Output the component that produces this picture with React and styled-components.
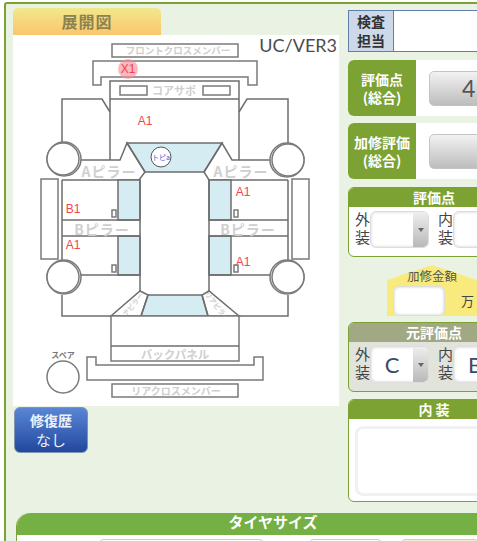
import styled, { createGlobalStyle } from "styled-components";

const GREEN = "#7ca234";
const JP = `"Noto Sans CJK JP", "Liberation Sans", sans-serif`;

const GlobalStyle = createGlobalStyle`
    html, body {
        margin: 0;
        padding: 0;
        background: #fff;
        overflow: hidden;
        height: 541px;
    }
`;

const Page = styled.div`
    box-sizing: border-box;
    width: 640px;
    margin: 2px 0 0 4px;
    padding: 4px 8px 12px 7px;
    border: 2px solid ${GREEN};
    border-radius: 3px;
    background: #eaf2e3;
    font-family: ${JP};
`;

const TopRow = styled.div`
    display: flex;
    align-items: flex-start;
    gap: 9px;
`;

const LeftColumn = styled.div`
    width: 326px;
    flex: none;
`;

const RightColumn = styled.div`
    width: 200px;
    flex: none;
    padding-top: 2px;
`;

const MapTab = styled.div`
    width: 148px;
    height: 27px;
    border-radius: 5px 5px 0 0;
    background: linear-gradient(#f1e88c, #fbc56c);
    color: #8c8350;
    font-size: 16px;
    font-weight: 700;
    line-height: 27px;
    text-align: center;
    letter-spacing: 1px;
`;

const MapSheet = styled.div`
    position: relative;
    height: 371px;
    background: #fff;
`;

const Version = styled.span`
    position: absolute;
    top: 0;
    right: 2px;
    font-family: Lato, "Liberation Sans", sans-serif;
    font-size: 18px;
    line-height: 20px;
    color: #4c4c4c;
`;

const Drawing = styled.svg`
    display: block;
    width: 326px;
    height: 371px;
    font-family: ${JP};

    .line {
        fill: none;
        stroke: #6e6e6e;
        stroke-width: 1.5;
    }
    .box {
        fill: #fff;
        stroke: #7a7a7a;
        stroke-width: 1.5;
    }
    .glass {
        fill: #d5ecf3;
        stroke: #6e6e6e;
        stroke-width: 1.5;
    }
    .part {
        fill: #cfcfcf;
        font-weight: 700;
        text-anchor: middle;
    }
    .pillar {
        letter-spacing: 1px;
    }
    .mark {
        fill: #f4434e;
        font-family: "Liberation Sans", sans-serif;
        font-size: 12px;
        text-anchor: middle;
    }
`;

const RepairButton = styled.button`
    display: block;
    width: 74px;
    height: 46px;
    margin: 1px 0 0 1px;
    padding: 0;
    border: 1px solid #8093b5;
    border-radius: 6px;
    background: linear-gradient(#5a86d6, #22489e);
    color: #eef2fa;
    font-family: ${JP};
    line-height: 20px;

    b {
        display: block;
        font-size: 14px;
    }
    span {
        display: block;
        font-size: 15px;
    }
`;

const Inspector = styled.div`
    display: flex;
    height: 42px;
    box-sizing: border-box;
    border: 1px solid #5e80a8;
    background: #fff;
`;

const InspectorLabel = styled.div`
    width: 44px;
    background: #cdd9e8;
    border-right: 1px solid #5e80a8;
    color: #333;
    font-size: 14px;
    font-weight: 700;
    line-height: 19px;
    text-align: center;
    padding-top: 1px;
`;

const ScoreCard = styled.div`
    display: flex;
    height: ${(p) => p.$height}px;
    margin-top: ${(p) => p.$top}px;
    border-radius: 6px 0 0 6px;
    background: #fff;
    overflow: hidden;
`;

const ScoreLabel = styled.div`
    width: 68px;
    flex: none;
    display: flex;
    flex-direction: column;
    justify-content: center;
    background: ${GREEN};
    color: #fff;
    font-size: 14px;
    font-weight: 700;
    line-height: 18px;
    text-align: center;
`;

const ScoreBody = styled.div`
    flex: 1;
    display: flex;
    align-items: center;
    padding-left: 13px;
`;

const ScoreButton = styled.div`
    box-sizing: border-box;
    width: 92px;
    height: 35px;
    border: 1px solid #c4c4c4;
    border-radius: 5px;
    background: linear-gradient(#f2f2f2, #bdbdbd);
    color: #555;
    font-family: Lato, "Liberation Sans", sans-serif;
    font-size: 23px;
    line-height: 33px;
    padding-left: 32px;
`;

const GradePanel = styled.div`
    margin-top: ${(p) => p.$top}px;
    height: ${(p) => p.$height}px;
    box-sizing: border-box;
    border: 1px solid ${GREEN};
    border-radius: 6px;
    background: ${(p) => (p.$muted ? "#e2e4dc" : "#fff")};
    overflow: hidden;
`;

const PanelHeader = styled.div`
    height: 19px;
    background: ${(p) => (p.$muted ? "#a0a884" : GREEN)};
    color: #fff;
    font-size: 14px;
    font-weight: 700;
    line-height: 19px;
    text-align: center;
    padding-right: 28px;
`;

const GradeRow = styled.div`
    display: flex;
    padding: 4px 0 0 6px;
`;

const SideLabel = styled.div`
    width: 15px;
    flex: none;
    margin-left: ${(p) => (p.$second ? 9 : 0)}px;
    margin-top: -1px;
    color: #444;
    font-size: 15px;
    line-height: 18px;
`;

const Select = styled.div`
    box-sizing: border-box;
    display: flex;
    width: 59px;
    height: 37px;
    flex: none;
    border: 1px solid #ddd;
    border-radius: 6px;
    background: #fff;
    box-shadow: inset 0 0 3px #ccc;
    overflow: hidden;
`;

const SelectValue = styled.div`
    flex: 1;
    color: #3d4a66;
    font-family: Lato, "Liberation Sans", sans-serif;
    font-size: 22px;
    line-height: 35px;
    text-align: center;
`;

const SelectArrow = styled.div`
    width: 15px;
    display: flex;
    align-items: center;
    justify-content: center;
    background: linear-gradient(#eee, #b9b9b9);

    &::after {
        content: "";
        border-left: 3.5px solid transparent;
        border-right: 3.5px solid transparent;
        border-top: 4px solid #666;
    }
`;

const AmountWrap = styled.div`
    display: flex;
    justify-content: flex-end;
    margin-top: 8px;
    width: 129px;
`;

const Amount = styled.div`
    box-sizing: border-box;
    width: 90px;
    height: 51px;
    padding: 21px 0 0 6px;
    position: relative;
    clip-path: polygon(0 15px, 50% 0, 100% 15px, 100% 100%, 0 100%);
    background: #f8ea7c;
    display: flex;
    align-items: flex-start;
`;

const AmountTitle = styled.div`
    position: absolute;
    top: 2px;
    left: 0;
    width: 100%;
    color: #555;
    font-size: 12.5px;
    line-height: 18px;
    text-align: center;
`;

const AmountInput = styled.div`
    box-sizing: border-box;
    width: 52px;
    height: 30px;
    border: 1px solid #ddd;
    border-radius: 6px;
    background: #fff;
    box-shadow: inset 0 0 3px #ccc;
`;

const AmountUnit = styled.span`
    margin: 6px 0 0 16px;
    color: #444;
    font-size: 13px;
    line-height: 18px;
`;

const NotePanel = styled.div`
    margin-top: 7px;
    height: 103px;
    box-sizing: border-box;
    border: 1px solid ${GREEN};
    border-radius: 6px;
    background: #fff;
    overflow: hidden;
`;

const NoteArea = styled.div`
    box-sizing: border-box;
    height: 70px;
    margin: 7px 6px 0;
    border: 3px solid #f1f1f1;
    border-radius: 8px;
    background: #fff;
`;

const TirePanel = styled.div`
    margin: 11px 0 0 3px;
    width: 512px;
    border-left: 1px solid ${GREEN};
    border-radius: 14px 0 0 0;
    background: #fff;
`;

const TireHeader = styled.div`
    height: 22px;
    border-radius: 14px 0 0 0;
    background: #75b044;
    color: #fff;
    font-size: 15px;
    font-weight: 700;
    line-height: 18px;
    text-align: center;
`;

const TireRow = styled.div`
    display: flex;
    padding: 4px 0 0 81px;
`;

const TireField = styled.div`
    box-sizing: border-box;
    width: ${(p) => p.$width}px;
    height: 30px;
    margin-left: ${(p) => p.$gap}px;
    border: 1px solid #ccc;
    border-radius: 6px;
    background: ${(p) => p.$bg};
`;

const MapDrawing = () => (
    <Drawing viewBox="13 35 326 371">
        <rect className="box" x="112" y="44" width="126" height="13" />
        <text className="part" x="178" y="54" fontSize="9.5">フロントクロスメンバー</text>
        <path className="box" d="M93 61H257V85H248V77H101V85H93Z" />

        <path className="line" d="M110 160V81H239V160M110 99H239" />
        <rect className="box" x="120" y="86" width="27" height="9" />
        <rect className="box" x="203" y="86" width="27" height="9" />
        <text className="part" x="174" y="95" fontSize="11">コアサポ</text>
        <path className="line" d="M62 143V99H102L110 112" />
        <path className="line" d="M239 112L247 99H288V143" />

        <path className="glass" d="M127 143H222L204 172H145Z" />
        <path className="line" d="M62 160H120L127 143L145 172L139 180H62" />
        <path className="line" d="M288 160H232L222 143L204 172L209 180H288" />
        <text className="part pillar" x="109" y="177" fontSize="14">Aピラー</text>
        <text className="part pillar" x="241" y="177" fontSize="14">Aピラー</text>

        <rect className="glass" x="118" y="180" width="22" height="40" />
        <rect className="glass" x="118" y="236" width="22" height="39" />
        <rect className="glass" x="209" y="180" width="22" height="40" />
        <rect className="glass" x="209" y="236" width="22" height="39" />
        <path className="line" d="M62 180V260M288 180V260M140 180V291M209 180V291" />
        <path className="line" d="M62 220H140M62 236H140M209 220H288M209 236H288M80 275H140M209 275H270" />
        <text className="part pillar" x="102" y="235" fontSize="14">Bピラー</text>
        <text className="part pillar" x="248" y="235" fontSize="14">Bピラー</text>
        <rect className="box" x="112" y="210" width="4" height="7" />
        <rect className="box" x="112" y="265" width="4" height="7" />
        <rect className="box" x="234" y="210" width="4" height="7" />
        <rect className="box" x="234" y="265" width="4" height="7" />

        <rect className="box" x="41" y="179" width="17" height="80" />
        <rect className="box" x="292" y="179" width="17" height="80" />

        <path className="glass" d="M148 295H202L208 316H141Z" />
        <path className="line" d="M140 291L148 295L141 316H111ZM209 291L202 295L208 316H239Z" />
        <text className="part" fontSize="7" transform="translate(133 309) rotate(-52)">リアピラー</text>
        <text className="part" fontSize="7" transform="translate(215 308) rotate(52)">リアピラー</text>
        <path className="line" d="M62 295V316H111M288 295V316H239" />
        <path className="box" d="M111 316H239V361H111Z" />
        <path className="line" d="M111 346H239" />
        <text className="part" x="175" y="359" fontSize="11.5">バックパネル</text>
        <path className="box" d="M87 357H96V365H254V357H263V380H87Z" />
        <rect className="box" x="112" y="384" width="126" height="13" />
        <text className="part" x="176" y="395" fontSize="10">リアクロスメンバー</text>

        <circle className="box" cx="64" cy="159" r="17" />
        <circle className="box" cx="63" cy="159" r="16" />
        <circle className="box" cx="287" cy="160" r="17" />
        <circle className="box" cx="288" cy="160" r="16" />
        <circle className="box" cx="64" cy="277" r="17" />
        <circle className="box" cx="63" cy="277" r="16" />
        <circle className="box" cx="287" cy="277" r="17" />
        <circle className="box" cx="288" cy="277" r="16" />
        <circle className="box" cx="63" cy="377" r="16" />
        <text x="63" y="358" fontSize="8" fontWeight="700" fill="#777" textAnchor="middle">スペア</text>

        <circle cx="128" cy="69" r="10" fill="#f58a93" fillOpacity="0.6" />
        <text className="mark" x="128" y="73">X1</text>
        <text className="mark" x="145" y="125">A1</text>
        <text className="mark" x="73" y="213">B1</text>
        <text className="mark" x="73" y="249">A1</text>
        <text className="mark" x="243" y="196">A1</text>
        <text className="mark" x="243" y="266">A1</text>
        <circle cx="161" cy="157" r="10" fill="#fff" stroke="#555" strokeWidth="1" />
        <text x="161" y="160" fontSize="7" fill="#4a55e0" textAnchor="middle">トピa</text>
    </Drawing>
);

const GradeFields = ({ outer, inner }) => (
    <GradeRow>
        <SideLabel>外<br />装</SideLabel>
        <Select>
            <SelectValue>{outer}</SelectValue>
            <SelectArrow />
        </Select>
        <SideLabel $second>内<br />装</SideLabel>
        <Select>
            <SelectValue>{inner}</SelectValue>
            <SelectArrow />
        </Select>
    </GradeRow>
);

const App = () => {
    return (
        <>
            <GlobalStyle />
            <Page>
                <TopRow>
                    <LeftColumn>
                        <MapTab>展開図</MapTab>
                        <MapSheet>
                            <Version>UC/VER3</Version>
                            <MapDrawing />
                        </MapSheet>
                        <RepairButton>
                            <b>修復歴</b>
                            <span>なし</span>
                        </RepairButton>
                    </LeftColumn>
                    <RightColumn>
                        <Inspector>
                            <InspectorLabel>検査<br />担当</InspectorLabel>
                        </Inspector>
                        <ScoreCard $height={56} $top={8}>
                            <ScoreLabel>評価点<br />(総合)</ScoreLabel>
                            <ScoreBody><ScoreButton>4</ScoreButton></ScoreBody>
                        </ScoreCard>
                        <ScoreCard $height={56} $top={7}>
                            <ScoreLabel>加修評価<br />(総合)</ScoreLabel>
                            <ScoreBody><ScoreButton /></ScoreBody>
                        </ScoreCard>
                        <GradePanel $height={70} $top={8}>
                            <PanelHeader>評価点</PanelHeader>
                            <GradeFields outer="" inner="" />
                        </GradePanel>
                        <AmountWrap>
                            <Amount>
                                <AmountTitle>加修金額</AmountTitle>
                                <AmountInput />
                                <AmountUnit>万</AmountUnit>
                            </Amount>
                        </AmountWrap>
                        <GradePanel $height={70} $top={6} $muted>
                            <PanelHeader $muted>元評価点</PanelHeader>
                            <GradeFields outer="C" inner="B" />
                        </GradePanel>
                        <NotePanel>
                            <PanelHeader>内 装</PanelHeader>
                            <NoteArea />
                        </NotePanel>
                    </RightColumn>
                </TopRow>
                <TirePanel>
                    <TireHeader>タイヤサイズ</TireHeader>
                    <TireRow>
                        <TireField $width={167} $gap={0} $bg="#fff" />
                        <TireField $width={75} $gap={43} $bg="#fff" />
                        <TireField $width={80} $gap={17} $bg="#f3ecd2" />
                    </TireRow>
                </TirePanel>
            </Page>
        </>
    );
};

export default App;
